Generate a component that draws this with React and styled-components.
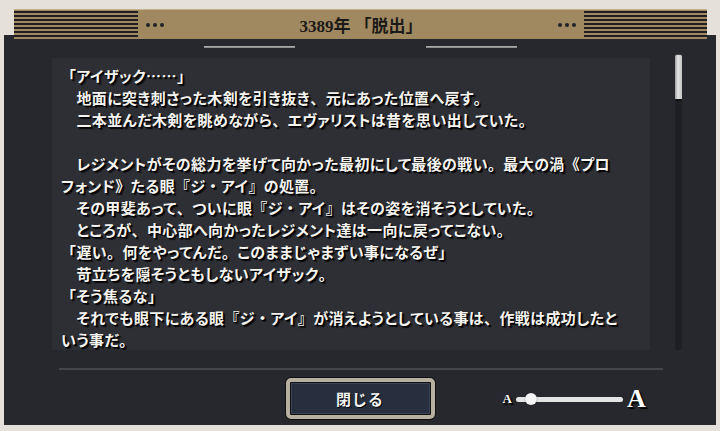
import React from "react";
import styled, { createGlobalStyle } from "styled-components";

const GlobalStyle = createGlobalStyle`
  html, body {
    margin: 0;
    padding: 0;
    background: #e6e0da;
  }
  * {
    box-sizing: border-box;
  }
`;

const Screen = styled.div`
  width: 720px;
  height: 431px;
  overflow: hidden;
  display: flex;
  flex-direction: column;
  background: #e6e0da;
  font-family: "Liberation Serif", "Noto Sans CJK JP", serif;
`;

const Header = styled.header`
  position: relative;
  z-index: 1;
  margin: 9px 13px 0 14px;
  height: 30px;
  display: grid;
  grid-template-columns: 124px 1fr 123px;
  background: #a08860;
  box-shadow: inset 0 1px 0 #c4b18c;
`;

const Stripes = styled.div`
  background: repeating-linear-gradient(
    to bottom,
    transparent 0 2px,
    #1e1f23 2px 4px
  );
`;

const HeaderMiddle = styled.div`
  display: flex;
  align-items: center;
  justify-content: space-between;
  padding: 0 8px;
`;

const Dots = styled.span`
  display: flex;
  gap: 3px;
  padding-top: 1px;
  span {
    width: 4px;
    height: 4px;
    border-radius: 50%;
    background: #23232a;
  }
`;

const Title = styled.h1`
  margin: 0;
  font-size: 17px;
  font-weight: 700;
  color: #1b1a18;
`;

const Panel = styled.main`
  margin: -4px 4px 0 4px;
  height: 390px;
  background: #27282d;
  display: flex;
  flex-direction: column;
  padding-top: 11px;
`;

const Ornaments = styled.div`
  display: flex;
  justify-content: center;
  gap: 131px;
  height: 2px;
`;

const OrnamentLine = styled.span`
  width: 91px;
  height: 2px;
  background: linear-gradient(to bottom, #b8b8b8, #808080);
`;

const Body = styled.div`
  margin-top: 6px;
  height: 296px;
  display: flex;
  padding-left: 48px;
`;

const TextBox = styled.div`
  width: 598px;
  height: 292px;
  margin-top: 4px;
  background: #2e2f34;
  padding: 7px 9px 0;
  overflow: hidden;
`;

const Line = styled.p`
  margin: 0;
  height: 22px;
  line-height: 22px;
  white-space: pre;
  font-family: "Noto Sans CJK JP", sans-serif;
  font-size: 15px;
  font-weight: 700;
  letter-spacing: 0.4px;
  color: #f5f4f0;
  font-feature-settings: "palt";
  text-shadow: 1px 1px 0 #000, 2px 2px 1px rgba(0, 0, 0, 0.85);
`;

const Punct = styled.span`
  font-feature-settings: normal;
`;

const Scrollbar = styled.div`
  margin-left: 25px;
  width: 7px;
  height: 296px;
  background: #1e1f23;
  border-radius: 3px;
  display: flex;
  flex-direction: column;
`;

const Thumb = styled.div`
  height: 47px;
  border-radius: 2px;
  background: linear-gradient(to right, #9c9c9c, #e4e4e4 40%, #c4c4c4);
  border-top: 1px solid #4a4a4a;
  border-bottom: 2px solid #111;
`;

const Divider = styled.hr`
  margin: 18px 0 0 55px;
  width: 604px;
  height: 2px;
  border: none;
  background: #44454a;
`;

const Footer = styled.footer`
  margin-top: 8px;
  height: 41px;
  display: grid;
  grid-template-columns: 1fr 149px 1fr;
  align-items: center;
`;

const CloseButton = styled.button`
  grid-column: 2;
  width: 149px;
  height: 41px;
  border-radius: 5px;
  border: 4px solid #b5b0a0;
  box-shadow: 0 0 0 1px #101010, inset 0 0 0 1px #101010,
    inset 0 0 0 2px #3a4455;
  background: #272f3e;
  color: #f2f2f2;
  font-family: "Noto Sans CJK JP", sans-serif;
  font-size: 15px;
  font-weight: 700;
  letter-spacing: 1px;
  text-shadow: 1px 1px 0 #000;
  cursor: pointer;
`;

const FontSize = styled.div`
  grid-column: 3;
  margin-left: 68px;
  display: flex;
  align-items: center;
  gap: 4px;
`;

const Letter = styled.span`
  font-family: "Liberation Serif", serif;
  font-weight: 700;
  font-size: ${(p) => p.$size}px;
  line-height: 1;
  color: #fff;
  text-shadow: 1px 1px 0 #000, 2px 2px 1px #000;
`;

const Track = styled.div`
  position: relative;
  width: 107px;
  height: 5px;
  border-radius: 3px;
  background: #e4e4e4;
  margin-top: 1px;
`;

const Knob = styled.span`
  position: absolute;
  top: 50%;
  width: 12px;
  height: 12px;
  margin: -6px 0 0 -6px;
  border-radius: 50%;
  background: #f4f4f4;
  box-shadow: 0 0 1px rgba(0, 0, 0, 0.6);
`;

const lines = [
  "「アイザック……」",
  "　地面に突き刺さった木剣を引き抜き、元にあった位置へ戻す。",
  "　二本並んだ木剣を眺めながら、エヴァリストは昔を思い出していた。",
  "",
  "　レジメントがその総力を挙げて向かった最初にして最後の戦い。最大の渦《プロ",
  "フォンド》たる眼『ジ・アイ』の処置。",
  "　その甲斐あって、ついに眼『ジ・アイ』はその姿を消そうとしていた。",
  "　ところが、中心部へ向かったレジメント達は一向に戻ってこない。",
  "「遅い。何をやってんだ。このままじゃまずい事になるぜ」",
  "　苛立ちを隠そうともしないアイザック。",
  "「そう焦るな」",
  "　それでも眼下にある眼『ジ・アイ』が消えようとしている事は、作戦は成功したと",
  "いう事だ。",
];

// keep punctuation full width, let kana set proportionally
const PUNCT = /([、。「」『』・《》…])/;

const renderLine = (text) =>
  text
    .split(PUNCT)
    .map((part, i) =>
      PUNCT.test(part) ? <Punct key={i}>{part}</Punct> : part
    );

const sliderValue = 0.14;

export default function App() {
  return (
    <Screen>
      <GlobalStyle />
      <Header>
        <Stripes />
        <HeaderMiddle>
          <Dots>
            <span />
            <span />
            <span />
          </Dots>
          <Title>3389年 「脱出」</Title>
          <Dots>
            <span />
            <span />
            <span />
          </Dots>
        </HeaderMiddle>
        <Stripes />
      </Header>
      <Panel>
        <Ornaments>
          <OrnamentLine />
          <OrnamentLine />
        </Ornaments>
        <Body>
          <TextBox>
            {lines.map((t, i) => (
              <Line key={i}>{renderLine(t)}</Line>
            ))}
          </TextBox>
          <Scrollbar>
            <Thumb />
          </Scrollbar>
        </Body>
        <Divider />
        <Footer>
          <CloseButton>閉じる</CloseButton>
          <FontSize>
            <Letter $size={13}>A</Letter>
            <Track>
              <Knob style={{ left: `${sliderValue * 100}%` }} />
            </Track>
            <Letter $size={26}>A</Letter>
          </FontSize>
        </Footer>
      </Panel>
    </Screen>
  );
}
